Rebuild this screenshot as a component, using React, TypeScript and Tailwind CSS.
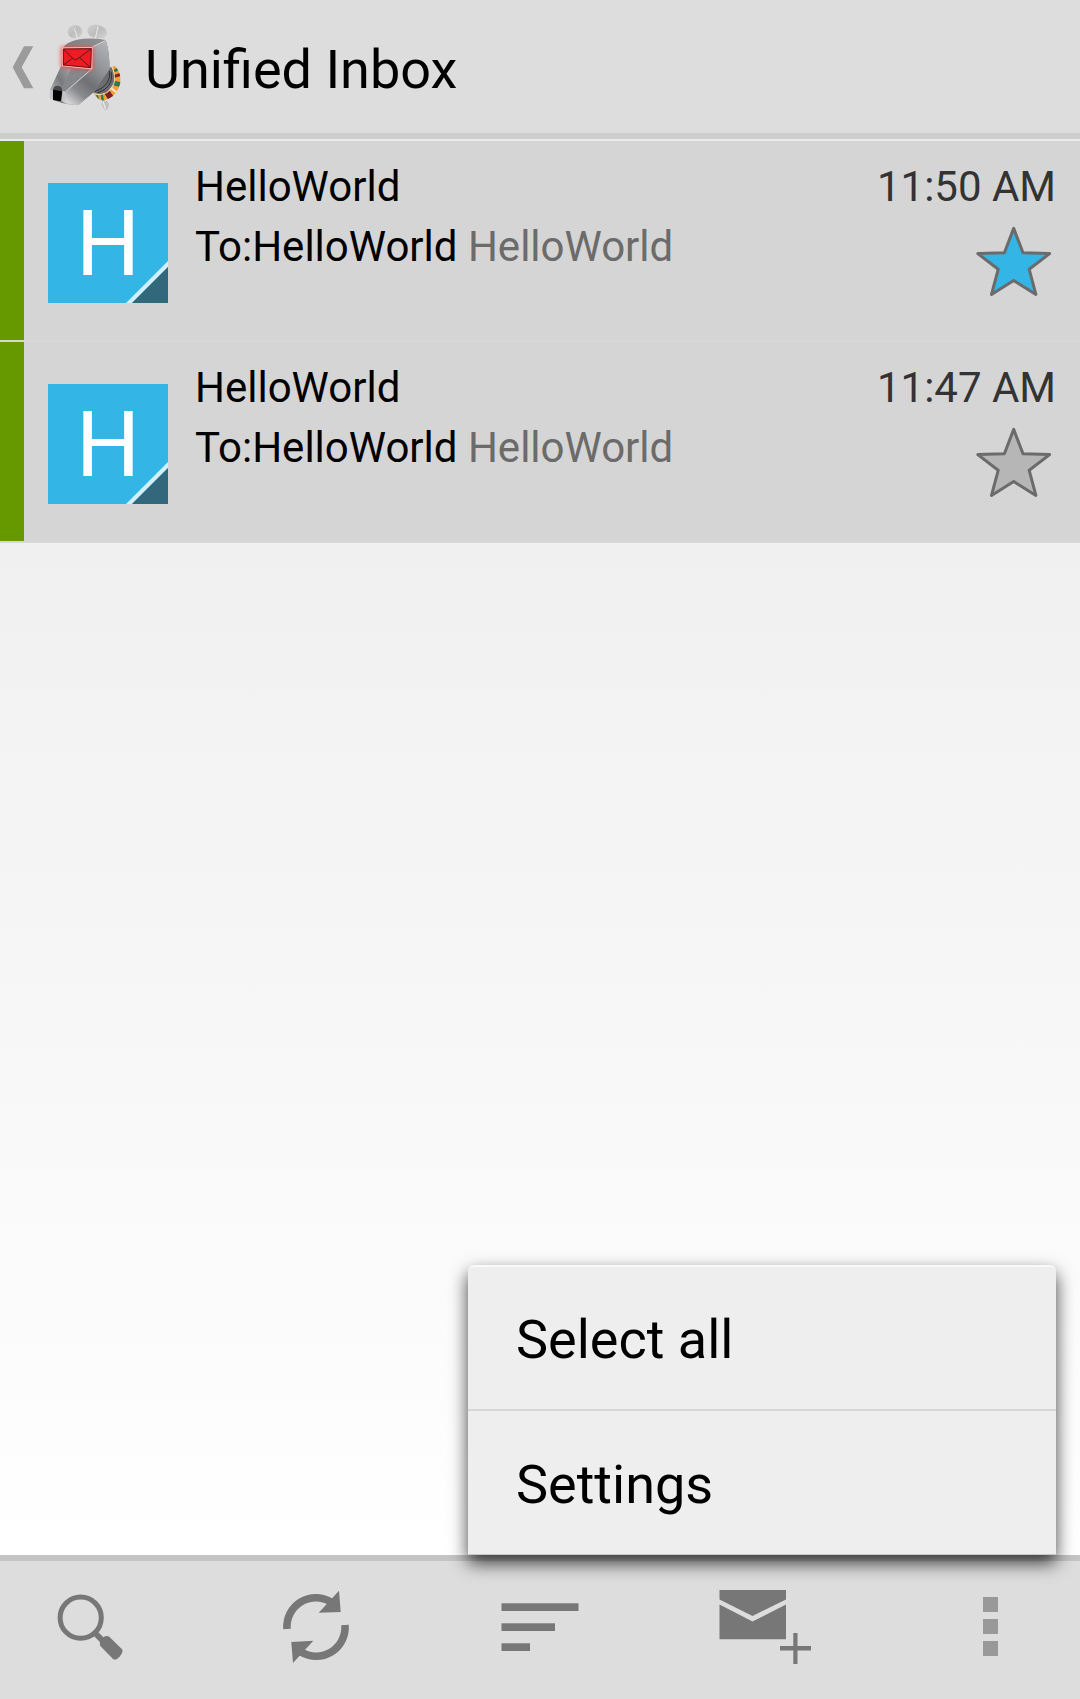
import React from "react";

type Message = {
  id: number;
  sender: string;
  recipient: string;
  preview: string;
  time: string;
  starred: boolean;
};

const messages: Message[] = [
  { id: 1, sender: "HelloWorld", recipient: "To:HelloWorld", preview: "HelloWorld", time: "11:50 AM", starred: true },
  { id: 2, sender: "HelloWorld", recipient: "To:HelloWorld", preview: "HelloWorld", time: "11:47 AM", starred: false },
];

function BackChevron() {
  return (
    <svg width="22" height="90" viewBox="36 74 66 270" aria-hidden="true">
      <path d="M72 138H100L65 201L100 264H72L38 201Z" fill="#9b9b9b" />
    </svg>
  );
}

function DogLogo() {
  return (
    <svg className="overflow-visible" width="78" height="90" viewBox="144 74 234 270" aria-hidden="true">
      <defs>
        <linearGradient id="head" x1="0" y1="0" x2="1" y2="1">
          <stop offset="0" stopColor="#77797c" />
          <stop offset="0.45" stopColor="#8d8f92" />
          <stop offset="0.6" stopColor="#6f7174" />
          <stop offset="1" stopColor="#b4b5b8" />
        </linearGradient>
        <linearGradient id="side" x1="0.8" y1="0" x2="0.2" y2="1">
          <stop offset="0" stopColor="#b0b1b5" />
          <stop offset="0.35" stopColor="#909195" />
          <stop offset="0.6" stopColor="#6e7073" />
          <stop offset="0.8" stopColor="#8a8b8e" />
          <stop offset="1" stopColor="#d2d2d4" />
        </linearGradient>
        <linearGradient id="snout" x1="1" y1="0" x2="0" y2="1">
          <stop offset="0" stopColor="#a6a7aa" />
          <stop offset="0.45" stopColor="#77797c" />
          <stop offset="1" stopColor="#c9c9cb" />
        </linearGradient>
        <linearGradient id="ear" x1="0" y1="0" x2="1" y2="1">
          <stop offset="0" stopColor="#d2d2d2" />
          <stop offset="0.5" stopColor="#bdbdbd" />
          <stop offset="1" stopColor="#d4d4d4" />
        </linearGradient>
        <clipPath id="collar">
          <path d="M335 199L345 197Q362 216 362 240Q360 266 340 286Q325 298 308 301Q294 297 283 284L284 279Q304 285 320 276Q342 260 343 236Q342 215 335 199Z" />
        </clipPath>
        <filter id="glow" x="-30%" y="-30%" width="160%" height="160%">
          <feGaussianBlur stdDeviation="6" />
        </filter>
      </defs>
      <ellipse cx="225" cy="94" rx="22" ry="20" fill="url(#ear)" />
      <path d="M262 91C264 74 281 71 293 74C310 76 322 87 321 100C318 114 304 115 292 113C276 112 264 104 262 91Z" fill="url(#ear)" />
      <path d="M223 85Q231 103 233 122M294 79Q289 103 283 126" fill="none" stroke="#ededed" strokeWidth="3" />
      <path d="M308 300Q324 300 327 312Q326 326 318 330Q305 322 305 310Z" fill="#bfc1c3" />
      <path d="M309 304L317 326" stroke="#e9e9e9" strokeWidth="4" />
      <path d="M325 203L334 200Q344 215 343 240Q338 262 318 277Q302 284 280 278Z" fill="#6b6d70" />
      <path d="M329 212Q334 256 284 274M334 216Q342 262 290 279" fill="none" stroke="#2f3031" strokeWidth="3" />
      <g clipPath="url(#collar)">
        <path d="M280 190H370V310H280Z" fill="#f0a136" />
        <path d="M343 212L360 203" stroke="#287153" strokeWidth="8" />
        <path d="M340 229L366 221" stroke="#7d2029" strokeWidth="9" />
        <path d="M338 247L366 254" stroke="#2d7855" strokeWidth="14" />
        <path d="M331 262L352 278" stroke="#f6e6cc" strokeWidth="6" />
        <path d="M316 268L336 298" stroke="#7b1e28" strokeWidth="18" />
        <path d="M305 278L309 306" stroke="#2d7855" strokeWidth="7" />
        <path d="M289 278L296 300" stroke="#2d7855" strokeWidth="5" />
        <path d="M335 199Q342 215 343 236Q342 260 320 276Q304 285 284 279" fill="none" stroke="#f8dca8" strokeWidth="5" />
      </g>
      <path d="M188 143Q200 125 230 118Q275 111 317 119Q328 151 329 205L280 276L235 314Q185 314 150 293L150 270L184 196Z" fill="url(#head)" />
      <path d="M277 142L317 119Q328 151 329 205L282 275L235 314Q205 315 188 305L197 274L275 205Z" fill="url(#side)" />
      <path d="M184 197L213 207L186 262L184 304Q164 300 149 293L150 270Z" fill="url(#snout)" />
      <path d="M213 207L273 207L198 274L188 262Z" fill="#85878a" />
      <path d="M277 140L316 121M198 273L273 208" fill="none" stroke="#d7d7d9" strokeWidth="3" />
      <path d="M159 269Q160 256 173 256Q187 257 187 272L183 303L159 298Z" fill="#48494b" />
      <path d="M159 268L186 273L183 303L159 299Z" fill="#000" />
      <path d="M150 270L158 268V296L150 293ZM188 271L199 274L195 305L184 303Z" fill="#c4c4c6" />
      <path d="M183 139H279V209L183 201Z" fill="#ff3d3d" filter="url(#glow)" opacity="0.85" />
      <path d="M188 143L276 142L275 205L187 196Z" fill="#ed1c24" stroke="#ffb4ae" strokeWidth="4" />
      <path d="M190 146L274 145L272 202L190 194ZM190 146L220 176Q227 182 234 175L274 145M190 194L218 173M239 172L272 202" fill="none" stroke="#631418" strokeWidth="3" />
    </svg>
  );
}

function Star({ filled }: { filled: boolean }) {
  return (
    <svg width="84" height="84" viewBox="6 -2 84 84" aria-hidden="true">
      <path
        d="M47.7 9.4L57 33.8L83.6 34.6L63.2 50.3L69.9 75.4L47.7 61.5L25.5 75.4L32.2 50.3L11.8 34.6L38.4 33.8Z"
        fill={filled ? "#33b5e5" : "#b6b6b6"}
        stroke="#6b6b6b"
        strokeWidth="3"
        strokeLinejoin="round"
      />
    </svg>
  );
}

function MessageRow({ message }: { message: Message }) {
  return (
    <li className="flex h-[201px] border-b-2 border-[#d7d7d7] bg-[#d5d5d5]">
      <span className="w-6 shrink-0 bg-[#669900]" />
      <button
        type="button"
        aria-label={`Contact ${message.sender}`}
        className="relative mt-[42px] ml-6 flex size-[120px] shrink-0 items-center justify-center bg-[#33b5e5] pt-1 text-[90px] leading-none text-white"
      >
        H
        <svg className="absolute right-0 bottom-0" width="42" height="42" viewBox="0 0 42 42" aria-hidden="true">
          <path d="M0 42L42 0V6L6 42Z" fill="#d3effa" />
          <path d="M6 42L42 6V42Z" fill="#33677c" />
        </svg>
      </button>
      <div className="ml-[27px] min-w-0 flex-1 pt-4 text-[42px] leading-[60px]">
        <p className="truncate">{message.sender}</p>
        <p className="truncate">
          {message.recipient} <span className="text-[#6b6b6b]">{message.preview}</span>
        </p>
      </div>
      <div className="flex shrink-0 flex-col items-end pt-4 pr-6">
        <time className="text-[42px] leading-[60px] text-[#333333]">{message.time}</time>
        <button type="button" aria-label="Star" aria-pressed={message.starred}>
          <Star filled={message.starred} />
        </button>
      </div>
    </li>
  );
}

function SearchIcon() {
  return (
    <svg width="96" height="96" viewBox="0 0 96 96" aria-hidden="true">
      <circle cx="38.7" cy="35.7" r="20.6" fill="none" stroke="#777" strokeWidth="5" />
      <path d="M53 51L62 60" stroke="#777" strokeWidth="6" />
      <path d="M62 54.7Q65 53.5 67.3 54.7L80.3 67.5Q81 69.5 79.5 72Q77.5 75.5 75 77Q72.5 78 71 77L58.3 64Q57 61 58.7 58Z" fill="#777" />
    </svg>
  );
}

function RefreshIcon() {
  return (
    <svg width="96" height="96" viewBox="0 0 96 96" aria-hidden="true">
      <path d="M20 47A29 29 0 0 1 64 20M78 43A29 29 0 0 1 34 70" fill="none" stroke="#777" strokeWidth="7.6" />
      <path d="M72 8.7L73.7 30L51.7 30.7ZM26 81L24.3 60L46.3 58.7Z" fill="#777" />
    </svg>
  );
}

function SortIcon() {
  return (
    <svg width="96" height="96" viewBox="0 0 96 96" aria-hidden="true" fill="#777">
      <rect x="9.5" y="21.3" width="77" height="7.7" />
      <rect x="9.5" y="41.3" width="53.5" height="7.7" />
      <rect x="9.5" y="61.3" width="28.5" height="7.7" />
    </svg>
  );
}

function ComposeIcon() {
  return (
    <svg width="96" height="96" viewBox="0 0 96 96" aria-hidden="true" fill="#777">
      <path d="M2.5 8H69V17.5L35.5 34L2.5 17.5Z" />
      <path d="M2.5 22.5L35.5 39.5L69 22.5V57.3H2.5Z" />
      <path d="M76.3 51H80.5V64H94V68.5H80.5V82H76.3V68.5H63V64H76.3Z" />
    </svg>
  );
}

function OverflowIcon() {
  return (
    <span className="flex flex-col gap-[7px] pb-2">
      <span className="size-[15px] bg-[#999999]" />
      <span className="size-[15px] bg-[#999999]" />
      <span className="size-[15px] bg-[#999999]" />
    </span>
  );
}

function BarButton({ label, children }: { label: string; children: React.ReactNode }) {
  return (
    <button type="button" aria-label={label} className="flex w-[180px] items-center justify-center">
      {children}
    </button>
  );
}

export default function App() {
  return (
    <div className="flex min-h-screen flex-col bg-white font-[Roboto,sans-serif] text-black">
      <header className="flex h-[139px] items-center border-b-[6px] border-[#cdcdcd] bg-[#dddddd] pt-[6px] pl-3">
        <a href="#accounts" aria-label="Back to accounts" className="flex items-center gap-[14px]">
          <BackChevron />
          <DogLogo />
        </a>
        <h1 className="ml-[19px] text-[54px] leading-16">Unified Inbox</h1>
      </header>

      <main className="flex flex-1 flex-col border-t-2 border-[#ebebeb]">
        <ul>
          {messages.map((message) => (
            <MessageRow key={message.id} message={message} />
          ))}
        </ul>
        <div className="flex-1 bg-linear-to-b from-[#f0f0f0] to-[#ffffff]" />
      </main>

      <footer className="relative flex h-36 justify-between border-t-[6px] border-[#c4c4c4] bg-[#dddddd]">
        <BarButton label="Search"><SearchIcon /></BarButton>
        <BarButton label="Refresh"><RefreshIcon /></BarButton>
        <BarButton label="Sort"><SortIcon /></BarButton>
        <BarButton label="Compose"><ComposeIcon /></BarButton>
        <BarButton label="More options"><OverflowIcon /></BarButton>

        <div
          role="menu"
          className="absolute right-6 bottom-full mb-[6px] w-[588px] rounded-t-md border-t-2 border-b border-t-[#fafafa] border-b-[#c8c8c8] bg-[#eeeeee] text-[54px] leading-16 shadow-[0_8px_18px_rgba(0,0,0,0.75)]"
        >
          <button type="button" role="menuitem" className="block h-36 w-full border-b-2 border-[#d6d6d6] px-12 pt-1 text-left">
            Select all
          </button>
          <button type="button" role="menuitem" className="block h-[143px] w-full px-12 pt-1 text-left">
            Settings
          </button>
        </div>
      </footer>
    </div>
  );
}
